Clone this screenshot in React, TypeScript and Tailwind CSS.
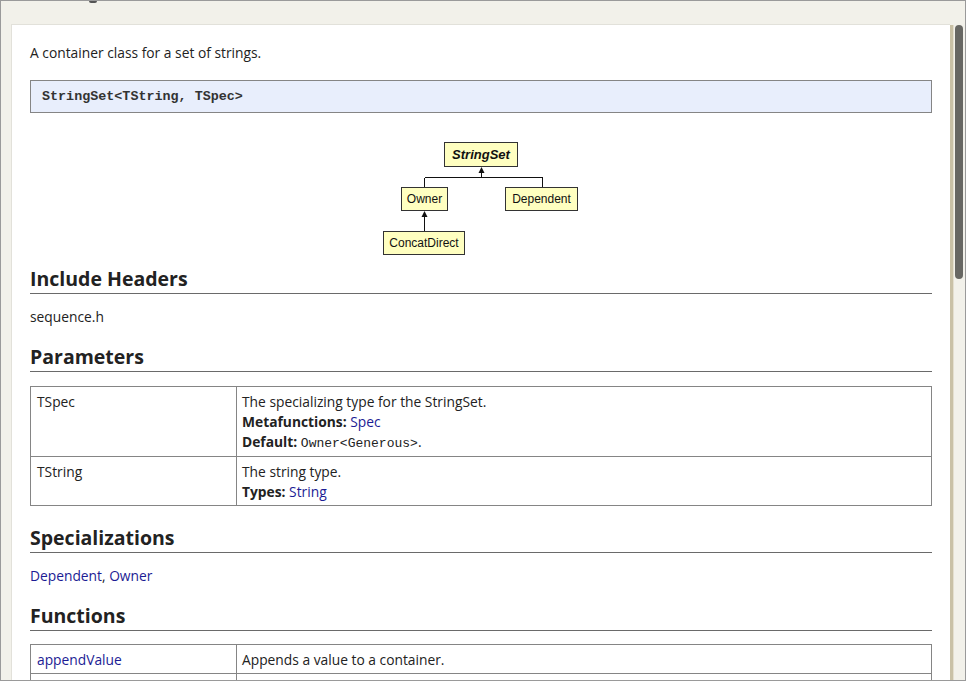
import React from "react";

const body = { fontFamily: '"Open Sans", "DejaVu Sans", sans-serif' };
const mono = { fontFamily: '"Liberation Mono", "DejaVu Sans Mono", monospace' };
const arial = { fontFamily: '"Liberation Sans", Arial, sans-serif' };

function Heading({ children, mt }: { children: React.ReactNode; mt: string }) {
  return (
    <h2
      className={`${mt} border-b border-[#6a6a6a] pb-[2px] text-[19.5px] leading-[24px] font-bold text-[#222]`}
      style={body}
    >
      {children}
    </h2>
  );
}

function Link({ children }: { children: React.ReactNode }) {
  return <span className="text-[#1c1c94]">{children}</span>;
}

function Line({ children }: { children: React.ReactNode }) {
  return <div className="h-[20px] whitespace-nowrap">{children}</div>;
}

function Node({
  label,
  cls,
  strong,
}: {
  label: string;
  cls: string;
  strong?: boolean;
}) {
  return (
    <div
      className={`absolute ${cls} flex items-center justify-center border border-[#333] bg-[#ffffc0] text-[12px] text-[#111] ${
        strong ? "font-bold italic text-[13px]" : ""
      }`}
      style={arial}
    >
      {label}
    </div>
  );
}

function Diagram() {
  return (
    <div className="relative mx-auto mt-[29px] h-[113px] w-[196px]">
      <svg
        className="absolute left-0 top-0"
        width="196"
        height="113"
        viewBox="0 0 196 113"
      >
        <g stroke="#111" strokeWidth="1" fill="none" shapeRendering="crispEdges">
          <line x1="98.5" y1="29" x2="98.5" y2="35.5" />
          <line x1="41.5" y1="35.5" x2="159.5" y2="35.5" />
          <line x1="41.5" y1="35.5" x2="41.5" y2="45" />
          <line x1="159.5" y1="35.5" x2="159.5" y2="45" />
          <line x1="41.5" y1="73" x2="41.5" y2="89" />
        </g>
        <polygon points="98.5,25 95.5,31 101.5,31" fill="#111" />
        <polygon points="41.5,69 38.5,75 44.5,75" fill="#111" />
      </svg>
      <Node label="StringSet" cls="left-[61px] top-0 w-[74px] h-[25px]" strong />
      <Node label="Owner" cls="left-[18px] top-[45px] w-[47px] h-[24px]" />
      <Node label="Dependent" cls="left-[122px] top-[45px] w-[73px] h-[24px]" />
      <Node label="ConcatDirect" cls="left-0 top-[89px] w-[82px] h-[24px]" />
    </div>
  );
}

const cellL = "w-[206px] border border-[#858585] px-[6px] pt-[5px] align-top";
const cellR = "border border-[#858585] px-[5px] pt-[5px] align-top";

export default function App() {
  return (
    <div
      className="relative flex h-[681px] w-[966px] overflow-hidden border border-[#9a9a9a] bg-[#f2f1ea] text-[#222]"
      style={body}
    >
      <div className="absolute left-[88px] top-0 h-[2px] w-[8px] rounded-b-full bg-[#555]" />
      <div className="flex flex-1 flex-col pl-[10px] pt-[23px]">
        <div className="flex-1 overflow-hidden border-l border-t border-[#e2e1da] bg-white pl-[18px] pr-[18px] pt-[18px] text-[13.8px] leading-[20px]">
          <p>A container class for a set of strings.</p>

          <div
            className="mt-[17px] flex h-[33px] items-center border border-[#858585] bg-[#e8eefc] px-[11px] text-[13.4px] font-bold text-[#333]"
            style={mono}
          >
            StringSet&lt;TString, TSpec&gt;
          </div>

          <Diagram />

          <Heading mt="mt-[12px]">Include Headers</Heading>
          <p className="mt-[13px] h-[20px]">sequence.h</p>

          <Heading mt="mt-[18px]">Parameters</Heading>
          <table className="mt-[14px] w-full border-collapse border border-[#858585]">
            <tbody>
              <tr>
                <td className={`${cellL} pb-[4px]`}>
                  <Line>TSpec</Line>
                </td>
                <td className={`${cellR} pb-[4px]`}>
                  <Line>The specializing type for the StringSet.</Line>
                  <Line>
                    <b>Metafunctions:</b> <Link>Spec</Link>
                  </Line>
                  <Line>
                    <b>Default:</b>{" "}
                    <span style={mono} className="text-[13px]">
                      Owner&lt;Generous&gt;
                    </span>
                    .
                  </Line>
                </td>
              </tr>
              <tr>
                <td className={`${cellL} pb-[3px]`}>
                  <Line>TString</Line>
                </td>
                <td className={`${cellR} pb-[3px]`}>
                  <Line>The string type.</Line>
                  <Line>
                    <b>Types:</b> <Link>String</Link>
                  </Line>
                </td>
              </tr>
            </tbody>
          </table>

          <Heading mt="mt-[20px]">Specializations</Heading>
          <p className="mt-[13px] h-[20px]">
            <Link>Dependent</Link>, <Link>Owner</Link>
          </p>

          <Heading mt="mt-[18px]">Functions</Heading>
          <table className="mt-[13px] w-full border-collapse border border-[#858585]">
            <tbody>
              <tr>
                <td className={`${cellL} pb-[3px]`}>
                  <Line>
                    <Link>appendValue</Link>
                  </Line>
                </td>
                <td className={`${cellR} pb-[3px]`}>
                  <Line>Appends a value to a container.</Line>
                </td>
              </tr>
              <tr>
                <td className={`${cellL} h-[29px]`} />
                <td className={`${cellR} h-[29px]`} />
              </tr>
            </tbody>
          </table>
        </div>
      </div>
      <div className="flex w-[15px] flex-col pt-[24px]">
        <div className="flex flex-1">
          <div className="w-[3px] bg-[#c9c1a6]" />
          <div className="w-[1px] bg-[#e4dfcf]" />
          <div className="flex-1 pl-[1px] pr-[2px]">
            <div className="h-[254px] w-[8px] rounded-full bg-[#676763]" />
          </div>
        </div>
      </div>
    </div>
  );
}
